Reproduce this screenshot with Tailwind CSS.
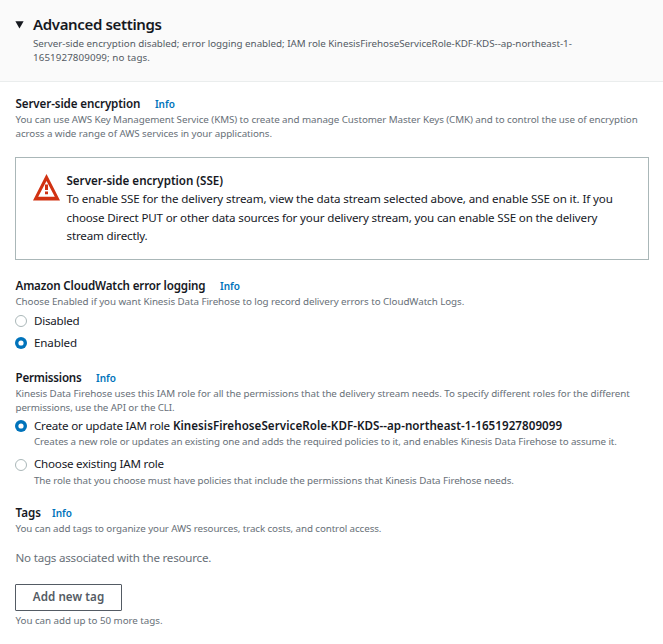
<!DOCTYPE html>
<html lang="en">
<head>
<meta charset="utf-8">
<title>Advanced settings</title>
<script src="https://cdn.jsdelivr.net/npm/@tailwindcss/browser@4"></script>
</head>
<body class="bg-white font-['Noto_Sans','Open_Sans',sans-serif] text-[11.6px] leading-[18px] text-[#16191f] whitespace-nowrap">
<header class="flex h-[82px] gap-[9px] border-b border-[#eaeded] bg-[#fafafa] pl-[15px] pt-[14px]">
  <svg class="mt-[7px] h-[8px] w-[9px]" viewBox="0 0 9 8"><path d="M.4.3h8.2L4.5 7.6z" fill="#16191f"/></svg>
  <div>
    <h1 class="text-[15px] font-semibold leading-[20px] tracking-[-0.35px]">Advanced settings</h1>
    <p class="mt-[3px] text-[9.8px] leading-[14px] text-[#545b64]"><span class="block tracking-[-0.03px]">Server-side encryption disabled; error logging enabled; IAM role KinesisFirehoseServiceRole-KDF-KDS--ap-northeast-1-</span><span class="block tracking-[0.09px]">1651927809099; no tags.</span></p>
  </div>
</header>
<main class="indent-[0.5px] pl-[15px] pt-[13px]">
  <section>
    <div class="flex gap-[14px]"><h2 class="font-semibold tracking-[-0.11px]">Server-side encryption</h2><a class="text-[10px] font-semibold text-[#0073bb]">Info</a></div>
    <p class="text-[9.8px] leading-[14px] tracking-[-0.072px] text-[#687078]"><span class="block">You can use AWS Key Management Service (KMS) to create and manage Customer Master Keys (CMK) and to control the use of encryption</span><span class="block">across a wide range of AWS services in your applications.</span></p>
    <div class="mt-[16px] flex h-[103px] w-[634px] gap-[6px] border border-[#aab7b8] pl-[17px] pt-[14px]">
      <svg class="mt-[1px] h-[28px] w-[27px]" viewBox="0 0 27 28"><path d="M13.5 1L27 27.5H0zM13.5 8L5.2 23.7h16.6z" fill="#d13212" fill-rule="evenodd"/><path d="M12 11.5h3v5.5h-3zM12 18.5h3v2.8h-3z" fill="#d13212"/></svg>
      <div>
        <h3 class="font-semibold tracking-[-0.02px]">Server-side encryption (SSE)</h3>
        <p class="leading-[18.5px]"><span class="block tracking-[-0.12px]">To enable SSE for the delivery stream, view the data stream selected above, and enable SSE on it. If you</span><span class="block tracking-[-0.163px]">choose Direct PUT or other data sources for your delivery stream, you can enable SSE on the delivery</span><span class="block tracking-[-0.17px]">stream directly.</span></p>
      </div>
    </div>
  </section>
  <section class="mt-[17px]">
    <div class="flex gap-[14px]"><h2 class="font-semibold tracking-[-0.15px]">Amazon CloudWatch error logging</h2><a class="text-[10px] font-semibold text-[#0073bb]">Info</a></div>
    <p class="text-[9.8px] leading-[14px] tracking-[-0.07px] text-[#687078]">Choose Enabled if you want Kinesis Data Firehose to log record delivery errors to CloudWatch Logs.</p>
    <div class="mt-[3px] flex gap-[7px] indent-0"><svg class="mt-[3px] size-[12px]" viewBox="0 0 12 12"><circle cx="6" cy="6" r="5.5" fill="#fff" stroke="#aab7b8"/></svg><span class="tracking-[-0.23px]">Disabled</span></div>
    <div class="mt-[4px] flex gap-[7px] indent-0"><svg class="mt-[3px] size-[12px]" viewBox="0 0 12 12"><circle cx="6" cy="6" r="6" fill="#0073bb"/><circle cx="6" cy="6" r="2.6" fill="#fff"/></svg><span class="tracking-[-0.14px]">Enabled</span></div>
  </section>
  <section class="mt-[17px]">
    <div class="flex gap-[14px]"><h2 class="font-semibold tracking-[-0.21px]">Permissions</h2><a class="text-[10px] font-semibold text-[#0073bb]">Info</a></div>
    <p class="text-[9.8px] leading-[14px] text-[#687078]"><span class="block tracking-[-0.067px]">Kinesis Data Firehose uses this IAM role for all the permissions that the delivery stream needs. To specify different roles for the different</span><span class="block tracking-[-0.11px]">permissions, use the API or the CLI.</span></p>
    <div class="mt-[2px] flex gap-[7px] indent-0">
      <svg class="mt-[3px] size-[12px]" viewBox="0 0 12 12"><circle cx="6" cy="6" r="6" fill="#0073bb"/><circle cx="6" cy="6" r="2.6" fill="#fff"/></svg>
      <div>
        <div class="flex gap-[3px]"><span class="tracking-[-0.21px]">Create or update IAM role</span><b class="font-semibold tracking-[0.05px]">KinesisFirehoseServiceRole-KDF-KDS--ap-northeast-1-1651927809099</b></div>
        <p class="text-[9.8px] leading-[14px] tracking-[-0.094px] text-[#687078]">Creates a new role or updates an existing one and adds the required policies to it, and enables Kinesis Data Firehose to assume it.</p>
      </div>
    </div>
    <div class="mt-[6px] flex gap-[7px] indent-0">
      <svg class="mt-[4px] size-[12px]" viewBox="0 0 12 12"><circle cx="6" cy="6" r="5.5" fill="#fff" stroke="#aab7b8"/></svg>
      <div>
        <div class="tracking-[-0.22px]">Choose existing IAM role</div>
        <p class="mt-px text-[9.8px] leading-[14px] tracking-[-0.087px] text-[#687078]">The role that you choose must have policies that include the permissions that Kinesis Data Firehose needs.</p>
      </div>
    </div>
  </section>
  <section class="mt-[16px]">
    <div class="flex gap-[10.5px]"><h2 class="font-semibold">Tags</h2><a class="text-[10px] font-semibold text-[#0073bb]">Info</a></div>
    <p class="text-[9.8px] leading-[14px] tracking-[-0.096px] text-[#687078]">You can add tags to organize your AWS resources, track costs, and control access.</p>
    <p class="mt-[13px] tracking-[-0.22px] text-[#687078]">No tags associated with the resource.</p>
    <button class="mt-[17px] flex h-[27px] w-[107px] justify-center rounded-[1px] border border-[#545b64] pt-[3px] font-semibold tracking-[0.07px] text-[#545b64]">Add new tag</button>
    <p class="mt-[3px] text-[9.8px] leading-[14px] tracking-[-0.04px] text-[#687078]">You can add up to 50 more tags.</p>
  </section>
</main>
</body>
</html>
